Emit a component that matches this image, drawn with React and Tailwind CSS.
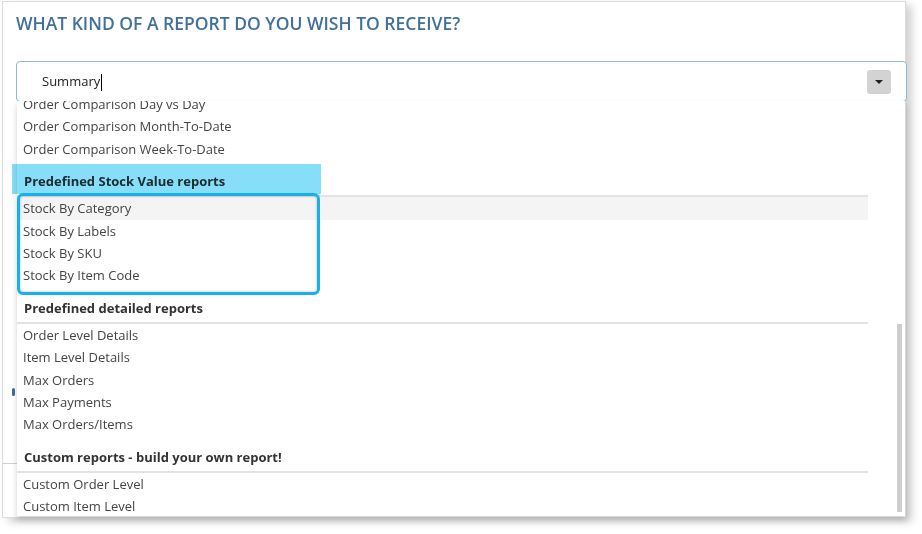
import React from "react";

const groups = [
  {
    title: null,
    items: ["Order Comparison Day vs Day", "Order Comparison Month-To-Date", "Order Comparison Week-To-Date"],
  },
  {
    title: "Predefined Stock Value reports",
    items: ["Stock By Category", "Stock By Labels", "Stock By SKU", "Stock By Item Code"],
    hoverFirst: true,
  },
  {
    title: "Predefined detailed reports",
    items: ["Order Level Details", "Item Level Details", "Max Orders", "Max Payments", "Max Orders/Items"],
  },
  {
    title: "Custom reports - build your own report!",
    items: ["Custom Order Level", "Custom Item Level"],
  },
];

const Option = ({ label, hover }) => (
  <div
    className={`h-[22.4px] leading-[22.4px] pl-[6px] text-[13px] text-[#444] whitespace-nowrap ${
      hover ? "bg-[#f4f4f4]" : ""
    }`}
  >
    {label}
  </div>
);

const Group = ({ title, items, hoverFirst }) => (
  <div className="flex flex-col">
    {title && (
      <div className="pt-[10px] pb-[3px] border-b-2 border-[#e3e3e3]">
        <div className="h-[22px] leading-[22px] pl-[7px] text-[13px] font-bold text-[#333]">{title}</div>
      </div>
    )}
    {items.map((it, i) => (
      <Option key={it} label={it} hover={hoverFirst && i === 0} />
    ))}
  </div>
);

export default function App() {
  return (
    <div className="w-[922px] h-[534px] bg-white overflow-hidden" style={{ fontFamily: '"Open Sans", "Noto Sans", sans-serif' }}>
      <div className="relative ml-[2px] mt-[1px] w-[904px] h-[517px] bg-white border border-[#dcdcdc] shadow-[6px_4px_8px_rgba(0,0,0,0.18)]">
        <h2 className="pl-[13px] pt-[9px] text-[17.5px] font-semibold leading-[24px] text-[#41709c]">
          WHAT KIND OF A REPORT DO YOU WISH TO RECEIVE?
        </h2>

        {/* content hidden behind the open list */}
        <div className="absolute left-[9px] top-[386px] w-[3px] h-[8px] rounded-sm bg-[#3b6fa8]"></div>
        <div className="absolute left-0 top-[461px] w-[20px] h-[1px] bg-[#cfcfcf]"></div>

        <div className="relative mt-[26px] ml-[13px] mr-[-2px]">
          <div className="h-[41px] flex items-center justify-between border border-[#93b6da] rounded-[4px] bg-white pl-[25px] pr-[15px]">
            <span className="text-[13px] text-[#222]">
              Summary<span className="inline-block w-[1px] h-[17px] bg-black align-middle ml-[1px]"></span>
            </span>
            <span className="w-[24px] h-[24px] rounded-[3px] bg-[#d3d3d3] flex items-center justify-center">
              <span className="w-0 h-0 border-l-[4px] border-r-[4px] border-t-[4px] border-l-transparent border-r-transparent border-t-[#222]"></span>
            </span>
          </div>

          {/* open list */}
          <div className="absolute left-[1px] top-[40px] w-[889px] h-[415px] flex bg-white border-r border-[#d6d6d6] shadow-[0_4px_6px_rgba(0,0,0,0.18)] overflow-hidden">
            <div className="w-[851px] mt-[-8px] flex flex-col">
              {groups.map((g, gi) => (
                <Group key={gi} {...g} />
              ))}
            </div>
            <div className="flex-1 flex justify-end items-end pr-[3px] pb-[4px]">
              <div className="w-[5px] h-[188px] bg-[#cdcdcd]"></div>
            </div>
          </div>

          {/* annotation marks over the list */}
          <div className="absolute left-[-4px] top-[103px] w-[309px] h-[30px] bg-[#87def9] mix-blend-multiply"></div>
          <div className="absolute left-[1px] top-[132px] w-[303px] h-[102px] border-[3px] border-[#16b1ea] rounded-[6px] shadow-[inset_0_0_3px_rgba(0,0,0,0.25)]"></div>
        </div>
      </div>
    </div>
  );
}
